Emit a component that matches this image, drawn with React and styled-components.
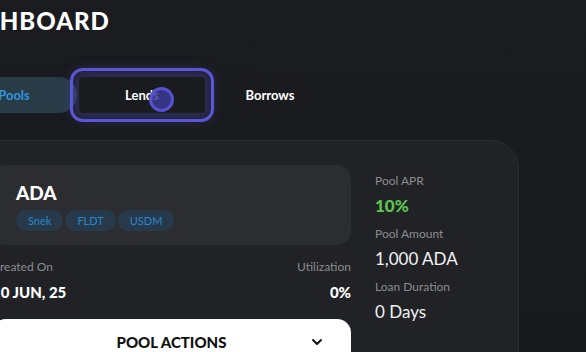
import React from 'react';
import styled, { createGlobalStyle } from 'styled-components';
import { ChevronDown } from 'lucide-react';

const GlobalStyle = createGlobalStyle`
  html, body {
    margin: 0;
    padding: 0;
    background: #1a1b1e;
    overflow: hidden;
  }
  body {
    font-family: 'Lato', 'Open Sans', sans-serif;
    color: #fff;
  }
`;

const Page = styled.div`
  width: 620px;
  height: 352px;
  margin-left: -33px;
  padding-top: 6px;
  background: linear-gradient(180deg, #1b1c1f 0%, #18191c 100%);
`;

const Title = styled.h1`
  margin: 0 0 0 -18px;
  font-size: 24px;
  line-height: 30px;
  font-weight: 900;
  letter-spacing: 1px;
`;

const Tabs = styled.div`
  display: flex;
  gap: 2px;
  margin: 41px 0 0 -16px;
`;

const Tab = styled.button`
  position: relative;
  width: 126px;
  height: 36px;
  border: none;
  border-radius: 18px;
  font-family: inherit;
  font-size: 13px;
  font-weight: 700;
  cursor: pointer;
  background: ${(p) => (p.$active ? '#2a3b48' : 'transparent')};
  color: ${(p) => (p.$active ? '#2f95dc' : '#ffffff')};
  outline: ${(p) => (p.$focused ? '3px solid #5a56d9' : 'none')};
  outline-offset: 6px;
  ${(p) => p.$focused && 'border-radius: 4px; box-shadow: 0 0 14px 6px rgba(90, 86, 217, 0.35);'}
`;

const Cursor = styled.span`
  position: absolute;
  left: 70px;
  top: 10px;
  width: 19px;
  height: 19px;
  border-radius: 50%;
  border: 3px solid #5652d4;
  background: rgba(60, 58, 150, 0.85);
`;

const Card = styled.div`
  display: grid;
  grid-template-columns: 1fr 119px;
  column-gap: 24px;
  width: 502px;
  margin-top: 27px;
  padding: 24px 24px 0 24px;
  height: 220px;
  background: #212226;
  border: 1px solid #2b2d31;
  border-radius: 0 28px 0 0;
`;

const LeftCol = styled.div`
  display: flex;
  flex-direction: column;
`;

const AssetBox = styled.div`
  height: 80px;
  box-sizing: border-box;
  padding: 16px 24px 0;
  background: #2c2d31;
  border-radius: 14px;
`;

const AssetName = styled.div`
  font-size: 19px;
  font-weight: 900;
  line-height: 24px;
`;

const TagRow = styled.div`
  display: flex;
  gap: 2px;
  margin-top: 5px;
`;

const Tag = styled.span`
  height: 21px;
  line-height: 21px;
  padding: 0 12px;
  border-radius: 11px;
  background: #263a4c;
  color: #2a86cc;
  font-size: 11px;
`;

const StatsRow = styled.div`
  display: flex;
  justify-content: space-between;
  margin-top: 14px;
`;

const Stat = styled.div`
  display: flex;
  flex-direction: column;
  align-items: ${(p) => (p.$right ? 'flex-end' : 'flex-start')};
  gap: 7px;
`;

const Label = styled.span`
  font-size: 12px;
  line-height: 16px;
  color: #8b8c90;
`;

const BoldValue = styled.span`
  font-size: 15px;
  line-height: 20px;
  font-weight: 900;
`;

const ActionButton = styled.button`
  position: relative;
  display: flex;
  align-items: center;
  justify-content: center;
  margin-top: 17px;
  height: 48px;
  border: none;
  border-radius: 14px;
  background: #ffffff;
  color: #111;
  font-family: inherit;
  font-size: 15px;
  font-weight: 900;
  padding: 0 0 2px;
  svg {
    position: absolute;
    right: 26px;
    top: 15px;
  }
`;

const RightCol = styled.div`
  display: flex;
  flex-direction: column;
  gap: 9px;
  padding-top: 8px;
`;

const Metric = styled.div`
  display: flex;
  flex-direction: column;
  gap: 6px;
`;

const MetricValue = styled.span`
  font-size: 17px;
  line-height: 22px;
  font-weight: ${(p) => (p.$green ? 900 : 400)};
  color: ${(p) => (p.$green ? '#5ec64f' : '#f2f2f2')};
`;

export default function App() {
  return (
    <>
      <GlobalStyle />
      <Page>
        <Title>DASHBOARD</Title>
        <Tabs>
          <Tab $active>Pools</Tab>
          <Tab $focused>
            Lends
            <Cursor />
          </Tab>
          <Tab>Borrows</Tab>
        </Tabs>
        <Card>
          <LeftCol>
            <AssetBox>
              <AssetName>ADA</AssetName>
              <TagRow>
                <Tag>Snek</Tag>
                <Tag>FLDT</Tag>
                <Tag>USDM</Tag>
              </TagRow>
            </AssetBox>
            <StatsRow>
              <Stat>
                <Label>Created On</Label>
                <BoldValue>10 JUN, 25</BoldValue>
              </Stat>
              <Stat $right>
                <Label>Utilization</Label>
                <BoldValue>0%</BoldValue>
              </Stat>
            </StatsRow>
            <ActionButton>
              POOL ACTIONS
              <ChevronDown size={16} strokeWidth={3} />
            </ActionButton>
          </LeftCol>
          <RightCol>
            <Metric>
              <Label>Pool APR</Label>
              <MetricValue $green>10%</MetricValue>
            </Metric>
            <Metric>
              <Label>Pool Amount</Label>
              <MetricValue>1,000 ADA</MetricValue>
            </Metric>
            <Metric>
              <Label>Loan Duration</Label>
              <MetricValue>0 Days</MetricValue>
            </Metric>
          </RightCol>
        </Card>
      </Page>
    </>
  );
}
